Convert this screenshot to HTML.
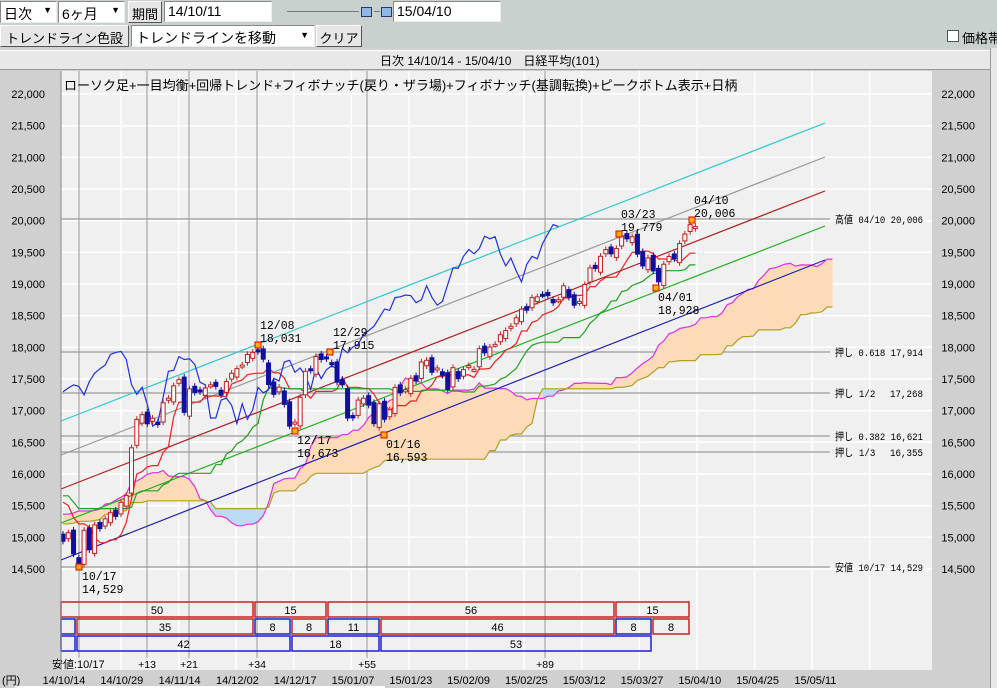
<!DOCTYPE html>
<html><head><meta charset="utf-8">
<style>
*{margin:0;padding:0;box-sizing:border-box}
body{width:997px;height:688px;overflow:hidden;background:#c9d1cf;font-family:"Liberation Sans","Noto Sans CJK JP",sans-serif;font-size:13px;position:relative}
.a{position:absolute}
.box{background:#fff;border:1px solid #888;border-right-color:#eee;border-bottom-color:#eee}
.btn{background:#e6e6e6;border:1px solid #fff;border-right-color:#555;border-bottom-color:#555;text-align:center}
</style></head><body>
<div class="a box" style="left:0;top:1px;width:57px;height:22px;padding:2px 3px;font-size:14px">日次<span class="a" style="right:4px;top:3px;font-size:9px">▼</span></div>
<div class="a box" style="left:58px;top:1px;width:67px;height:22px;padding:2px 3px;font-size:14px">6ヶ月<span class="a" style="right:4px;top:3px;font-size:9px">▼</span></div>
<div class="a btn" style="left:128px;top:1px;width:34px;height:22px;padding-top:2px">期間</div>
<div class="a box" style="left:164px;top:1px;width:108px;height:21px;padding:1px 3px;font-size:14px">14/10/11</div>
<div class="a" style="left:287px;top:11px;width:72px;height:1px;background:#777"></div>
<div class="a" style="left:361px;top:7px;width:11px;height:10px;background:#8fb8e8;border:1px solid #336"></div>
<div class="a" style="left:374px;top:11px;width:6px;height:1px;background:#777"></div>
<div class="a" style="left:381px;top:7px;width:11px;height:10px;background:#8fb8e8;border:1px solid #336"></div>
<div class="a box" style="left:393px;top:1px;width:108px;height:21px;padding:1px 3px;font-size:14px">15/04/10</div>
<div class="a btn" style="left:0;top:25px;width:129px;height:22px;padding-top:2px">トレンドライン色設定</div>
<div class="a box" style="left:131px;top:25px;width:184px;height:22px;padding:2px 4px;font-size:14px">トレンドラインを移動<span class="a" style="right:5px;top:4px;font-size:9px">▼</span></div>
<div class="a btn" style="left:316px;top:25px;width:46px;height:22px;padding-top:2px">クリア</div>
<div class="a" style="left:947px;top:30px;width:12px;height:12px;background:#fff;border:1px solid #555"></div>
<div class="a" style="left:962px;top:28px;font-size:13px;white-space:nowrap">価格帯</div>
<div class="a" style="left:0;top:48px;width:997px;height:640px;background:#d0d0d0"></div>
<div class="a" style="left:0;top:50px;width:990px;height:20px;background:#e8e8e8;border-top:1px solid #fff;border-bottom:1px solid #999"></div>
<div class="a" style="left:990px;top:48px;width:7px;height:640px;background:#e8e8e8;border-left:1px solid #999"></div>
<svg class="a" id="sv" style="left:0;top:0" width="997" height="688" xmlns="http://www.w3.org/2000/svg" font-family="Liberation Sans, Noto Sans CJK JP, sans-serif"></svg>
<div class="a" style="left:380px;top:52px;font-size:12px;white-space:nowrap">日次 14/10/14 - 15/04/10　日経平均(101)</div>
<div class="a" style="left:64px;top:75px;font-size:13px;white-space:nowrap">ローソク足+一目均衡+回帰トレンド+フィボナッチ(戻り・ザラ場)+フィボナッチ(基調転換)+ピークボトム表示+日柄</div>
<script>
const pre=[15395,15379,15370,15215,15343,15328,15284,15457,15457,15529,15618,15646,15620,15523,15474,15320,15232,15160,14778,14924,15130,15161,15314,15322,15449,15454,15586,15539,15613,15534,15521,15459,15425,15476,15668,15728,15676,15705,15749,15788,15948,15909,15911,16044,16067,16321,16205,16167,16374,16229,16173,16067,15708,15661,15890,15783,15478,15300];
const m=[14938,15073,14738,14532,15111,14804,15195,15138,15291,15388,15329,15553,15658,16413,
16862,16937,16792,16880,16780,17124,17197,17392,17490,16973,17344,17288,17300,17357,17407,17383,17248,17459,
17590,17663,17720,17887,17920,17935,17813,17412,17257,17371,17099,16755,16819,17210,17621,17635,17854,17808,17818,17729,17450,
17408,16883,16885,17167,17197,17087,16795,17108,16864,17014,17366,17280,17329,17511,17468,17768,17795,17606,17674,
17558,17335,17678,17504,17648,17711,17652,17979,17913,18004,18047,18199,18264,18332,18466,18603,18585,18785,18797,
18826,18815,18704,18751,18971,18790,18665,18723,18991,19254,19246,19437,19544,19476,19560,19754,19713,19746,19471,19285,19411,19206,
19034,19312,19435,19397,19640,19789,19937,19907];
const Y=p=>94+(22000-p)*0.06333, X=i=>63+i*5.27;
let s='';
s+='<rect x="61" y="71" width="871" height="599" fill="#f0f0f0"/>';
for(let p=14500;p<=22000;p+=500){s+=`<line x1="61" x2="932" y1="${Y(p).toFixed(1)}" y2="${Y(p).toFixed(1)}" stroke="#fff" stroke-width="1.5"/>`;}
for(let k=0;k<14;k++){let x=(121+k*57.6).toFixed(1);s+=`<line x1="${x}" x2="${x}" y1="71" y2="670" stroke="#fff" stroke-width="1.5"/>`;}
for(let p=14500;p<=22000;p+=500){let t=(p+'').replace(/(\d\d)(\d{3})$/,'$1,$2');let y=Y(p)+4;
s+=`<text x="45" y="${y}" font-size="11" text-anchor="end">${t}</text><text x="975" y="${y}" font-size="11" text-anchor="end">${t}</text>`;}
[79,147,189,257,367,545].forEach(x=>s+=`<line x1="${x}" x2="${x}" y1="71" y2="658" stroke="#999"/>`);
[[219,'高値 04/10 20,006'],[352,'押し 0.618 17,914'],[393,'押し 1/2　 17,268'],[436,'押し 0.382 16,621'],[452,'押し 1/3　 16,355'],[567,'安値 10/17 14,529']].forEach(a=>{
s+=`<line x1="61" x2="830" y1="${a[0]}" y2="${a[0]}" stroke="#999" stroke-width="1.2"/><text x="835" y="${a[0]+4}" font-size="10.5" textLength="88" lengthAdjust="spacingAndGlyphs" font-family="Liberation Mono, Noto Sans CJK JP, monospace">${a[1]}</text>`;});
const C=pre.concat(m),H=C.map(c=>c+70),L=C.map(c=>c-70),o=pre.length;
const mid=(j,n)=>{let a=Math.max(0,j-n+1),h=-1e9,l=1e9;for(let k=a;k<=j;k++){h=Math.max(h,H[k]);l=Math.min(l,L[k]);}return (h+l)/2;};
let A=[],B=[];
for(let i=-26;i<m.length;i++){let j=i+o;A.push([X(i+26),Y((mid(j,9)+mid(j,26))/2)]);B.push([X(i+26),Y(mid(j,52))]);}
for(let k=0;k<A.length-1;k++){let up=A[k][1]<B[k][1];
s+=`<polygon points="${A[k][0]},${A[k][1]} ${A[k+1][0]},${A[k+1][1]} ${B[k+1][0]},${B[k+1][1]} ${B[k][0]},${B[k][1]}" fill="${up?'#fddbb8':'#bcdcf6'}" stroke="${up?'#fddbb8':'#bcdcf6'}" stroke-width="0.5"/>`;}
const pl=(pts,c)=>`<polyline fill="none" stroke="${c}" stroke-width="1.2" points="${pts.map(p=>p[0].toFixed(1)+','+p[1].toFixed(1)).join(' ')}"/>`;
s+=pl(A,'#e030e0')+pl(B,'#b0a020');
[['#30c8d0',421,123],['#999',455,157],['#b02020',489,191],['#20b020',523,226],['#2020b0',560,260]].forEach(a=>s+=`<line x1="61" y1="${a[1]}" x2="825" y2="${a[2]}" stroke="${a[0]}" stroke-width="1.2"/>`);
let T=[],K=[],CH=[];
for(let i=0;i<m.length;i++){let j=i+o;T.push([X(i),Y(mid(j,9))]);K.push([X(i),Y(mid(j,26))]);if(i>=26)CH.push([X(i-26),Y(m[i])]);}
s+=pl(T,'#f02020')+pl(K,'#20a020')+pl(CH,'#2030e0');
for(let i=0;i<m.length;i++){let c=m[i],op=i?m[i-1]+(i%3==0?-60:40):15050;let x=X(i),up=c>=op;
let t=Y(Math.max(op,c)),b=Y(Math.min(op,c)),hh=Y(Math.max(op,c)+50),ll=Y(Math.min(op,c)-50);if(b-t<2)b=t+2;
let col=up?'#c02020':'#1010a0';
s+=`<line x1="${x}" x2="${x}" y1="${hh}" y2="${ll}" stroke="${col}"/><rect x="${x-2}" y="${t}" width="4" height="${b-t}" fill="${up?'#f8f8f8':col}" stroke="${col}"/>`;}
[[79,567],[258,345],[330,352],[295,431],[384,435],[619,234],[656,288],[692,220]].forEach(p=>s+=`<rect x="${p[0]-3}" y="${p[1]-3}" width="6" height="6" fill="#ffb000" stroke="#e00000"/>`);
const lab=(x,y,t)=>s+=`<text x="${x}" y="${y}" font-size="11.5" font-family="Liberation Mono, monospace">${t}</text>`;
lab(82,580,'10/17');lab(82,593,'14,529');lab(260,329,'12/08');lab(260,342,'18,031');lab(333,336,'12/29');lab(333,349,'17,915');
lab(297,444,'12/17');lab(297,457,'16,673');lab(386,448,'01/16');lab(386,461,'16,593');lab(621,218,'03/23');lab(621,231,'19,779');
lab(694,204,'04/10');lab(694,217,'20,006');lab(658,301,'04/01');lab(658,314,'18,928');
const bx=(x1,x2,r,c,t)=>{let y=602+r*17;s+=`<rect x="${x1}" y="${y}" width="${x2-x1}" height="15" fill="none" stroke="${c}" stroke-width="1.5"/>`;if(t)s+=`<text x="${(x1+x2)/2}" y="${y+12}" font-size="11" text-anchor="middle">${t}</text>`;};
const R='#d02020',Bl='#2020d0';
bx(61,253,0,R,'50');bx(255,326,0,R,'15');bx(328,614,0,R,'56');bx(616,689,0,R,'15');
bx(61,75,1,Bl,'');bx(77,253,1,R,'35');bx(255,290,1,Bl,'8');bx(292,326,1,R,'8');bx(328,379,1,Bl,'11');bx(381,614,1,R,'46');bx(616,651,1,Bl,'8');bx(653,689,1,R,'8');
bx(61,75,2,Bl,'');bx(77,290,2,Bl,'42');bx(292,379,2,Bl,'18');bx(381,651,2,Bl,'53');
s+='<text x="52" y="668" font-size="11">安値:10/17</text>';
[[147,'+13'],[189,'+21'],[257,'+34'],[367,'+55'],[545,'+89']].forEach(a=>s+=`<text x="${a[0]}" y="668" font-size="10.5" text-anchor="middle">${a[1]}</text>`);
s+='<line x1="61" x2="61" y1="71" y2="670" stroke="#888"/>';
s+='<text x="2" y="684" font-size="11">(円)</text>';
['14/10/14','14/10/29','14/11/14','14/12/02','14/12/17','15/01/07','15/01/23','15/02/09','15/02/25','15/03/12','15/03/27','15/04/10','15/04/25','15/05/11'].forEach((d,k)=>s+=`<text x="${64+k*57.8}" y="684" font-size="11" text-anchor="middle">${d}</text>`);
s+='<rect x="15" y="686" width="370" height="2" fill="#fff"/>';
document.getElementById('sv').innerHTML=s;
</script>
</body></html>
